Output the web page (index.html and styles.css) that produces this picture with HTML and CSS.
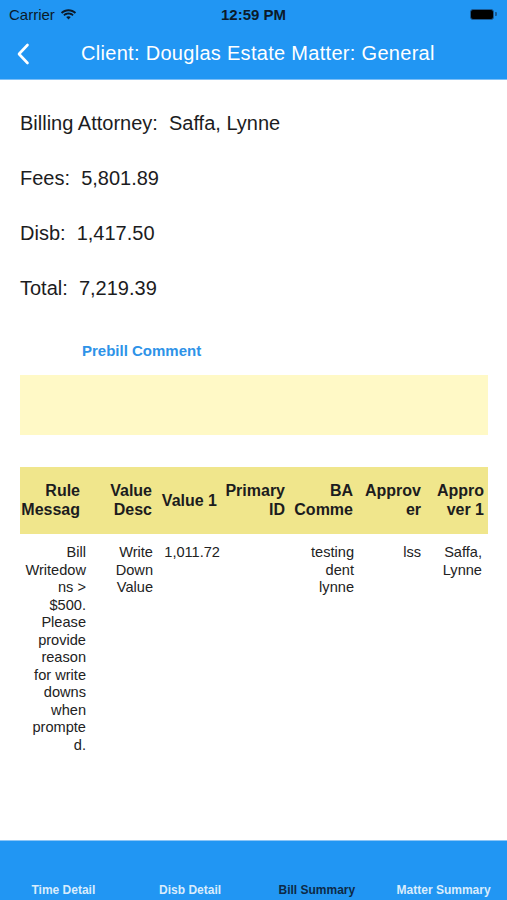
FILE: index.html
```html
<!DOCTYPE html>
<html>
<head>
<meta charset="utf-8">
<link rel="stylesheet" href="styles.css">
</head>
<body>
<div class="app">
  <header class="top">
    <div class="status">
      <div class="carrier">Carrier
        <svg class="wifi" width="17" height="12" viewBox="0 0 17 12"><path d="M8.5 2.2c2.4 0 4.6.9 6.3 2.5l1.3-1.4C14.1 1.3 11.4.2 8.5.2S2.9 1.3.9 3.3l1.3 1.4C3.9 3.1 6.1 2.2 8.5 2.2z" fill="#0b1a2a"/><path d="M8.5 5.6c1.5 0 2.8.5 3.9 1.5l1.3-1.4C12.3 4.4 10.5 3.6 8.5 3.6S4.7 4.4 3.3 5.7l1.3 1.4c1.1-1 2.4-1.5 3.9-1.5z" fill="#0b1a2a"/><path d="M8.5 7.2c-.9 0-1.7.3-2.3.9L8.5 10.6l2.3-2.5c-.6-.6-1.4-.9-2.3-.9z" fill="#0b1a2a"/></svg>
      </div>
      <div class="time">12:59 PM</div>
      <div class="battery"><span class="batt-body"></span><span class="batt-tip"></span></div>
    </div>
    <nav class="navbar">
      <svg class="back" width="14" height="22" viewBox="0 0 14 22"><path d="M11.5 2L3 11l8.5 9" fill="none" stroke="#fff" stroke-width="2.6" stroke-linecap="round" stroke-linejoin="round"/></svg>
      <div class="title">Client: Douglas Estate Matter: General</div>
    </nav>
  </header>

  <main class="content">
    <div class="info">
      <div class="line">Billing Attorney:&nbsp; Saffa, Lynne</div>
      <div class="line">Fees:&nbsp; 5,801.89</div>
      <div class="line">Disb:&nbsp; 1,417.50</div>
      <div class="line">Total:&nbsp; 7,219.39</div>
    </div>
    <div class="prebill">Prebill Comment</div>
    <div class="comment-box"></div>

    <div class="table">
      <div class="thead">
        <div class="th">Rule<br>Messag</div>
        <div class="th">Value<br>Desc</div>
        <div class="th">Value 1</div>
        <div class="th">Primary<br>ID</div>
        <div class="th">BA<br>Comme</div>
        <div class="th">Approv<br>er</div>
        <div class="th">Appro<br>ver 1</div>
      </div>
      <div class="trow">
        <div class="td">Bill<br>Writedow<br>ns &gt;<br>$500.<br>Please<br>provide<br>reason<br>for write<br>downs<br>when<br>prompte<br>d.</div>
        <div class="td">Write<br>Down<br>Value</div>
        <div class="td">1,011.72</div>
        <div class="td"></div>
        <div class="td">testing<br>dent<br>lynne</div>
        <div class="td">lss</div>
        <div class="td">Saffa,<br>Lynne</div>
      </div>
    </div>
  </main>

  <footer class="tabbar">
    <div class="tab">Time Detail</div>
    <div class="tab">Disb Detail</div>
    <div class="tab active">Bill Summary</div>
    <div class="tab">Matter Summary</div>
  </footer>
</div>
</body>
</html>
```

FILE: styles.css
```css
* { box-sizing: border-box; }
html, body { margin: 0; padding: 0; }
body {
  font-family: "Liberation Sans", Arial, sans-serif;
  color: #1c1c1e;
  background: #fff;
}
.app {
  width: 507px;
  height: 900px;
  display: flex;
  flex-direction: column;
  overflow: hidden;
}
.top {
  background: #2196f3;
  border-bottom: 1px solid #7dbff7;
  height: 80px;
}
.status {
  height: 28px;
  display: flex;
  align-items: center;
  justify-content: space-between;
  padding: 0 10px 0 9px;
  position: relative;
  color: #0b1a2a;
}
.carrier {
  font-size: 15px;
  display: flex;
  align-items: center;
  gap: 5px;
  padding-top: 1px;
}
.time {
  position: absolute;
  left: 0;
  right: 0;
  text-align: center;
  font-size: 15px;
  font-weight: bold;
  padding-top: 1px;
}
.battery {
  display: flex;
  align-items: center;
  gap: 1px;
}
.batt-body {
  width: 24px;
  height: 11px;
  border-radius: 3px;
  background: #000;
  border: 1px solid #1a5a94;
}
.batt-tip {
  width: 2px;
  height: 4px;
  border-radius: 0 1px 1px 0;
  background: #1a5a94;
}
.navbar {
  height: 51px;
  display: flex;
  align-items: center;
  padding-left: 16px;
}
.back { flex: none; }
.title {
  color: #fff;
  font-size: 20px;
  letter-spacing: 0.3px;
  margin-left: 51px;
  white-space: nowrap;
}
.content {
  flex: 1;
  padding: 0 19px 0 20px;
}
.info {
  padding-top: 32px;
  display: flex;
  flex-direction: column;
  gap: 32px;
}
.line {
  font-size: 20px;
  line-height: 23px;
}
.prebill {
  margin-top: 42px;
  margin-left: 62px;
  color: #2e93e8;
  font-size: 15px;
  font-weight: bold;
  line-height: 18px;
}
.comment-box {
  margin-top: 15px;
  height: 60px;
  background: #fff9c6;
}
.table {
  margin-top: 32px;
}
.thead, .trow {
  display: grid;
  grid-template-columns: 67px 67px 67px 67px 67px 67px 66px;
}
.thead {
  background: #f0e68c;
  height: 67px;
  align-items: center;
}
.th {
  font-size: 16px;
  font-weight: bold;
  line-height: 19px;
  text-align: right;
  padding-bottom: 1px;
}
.th:nth-child(1) { padding-right: 7px; }
.th:nth-child(2) { padding-right: 2px; }
.th:nth-child(3) { padding-right: 4px; }
.th:nth-child(4) { padding-right: 3px; }
.th:nth-child(5) { padding-right: 2px; }
.th:nth-child(6) { padding-right: 1px; }
.th:nth-child(7) { padding-right: 4px; }
.trow {
  padding-top: 10px;
}
.td {
  font-size: 14.6px;
  line-height: 17.5px;
  text-align: right;
  padding-right: 1px;
  color: #222;
}
.td:nth-child(7) { padding-right: 6px; }
.tabbar {
  height: 60px;
  background: #2196f3;
  border-top: 1px solid #8cc6f7;
  display: grid;
  grid-template-columns: repeat(4, 1fr);
  align-items: end;
  padding-bottom: 3px;
}
.tab {
  text-align: center;
  font-size: 12px;
  font-weight: bold;
  color: #d9ecfc;
  line-height: 14px;
}
.tab.active { color: #0d2a47; }
```
